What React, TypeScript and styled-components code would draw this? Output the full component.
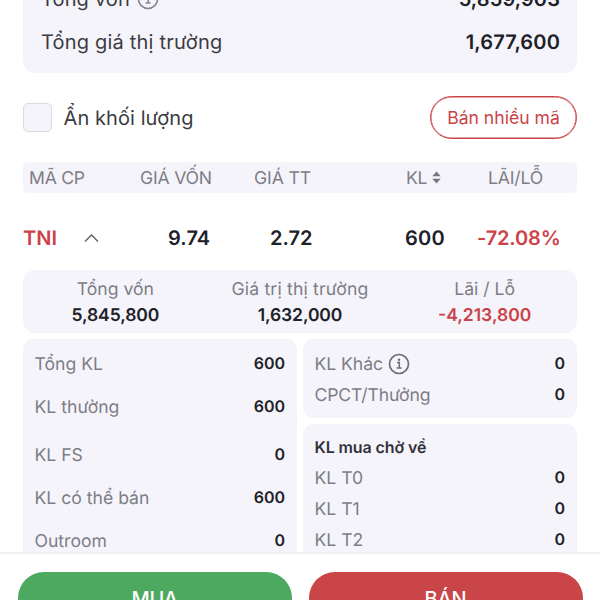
import React from "react";
import styled, { createGlobalStyle } from "styled-components";

const GlobalStyle = createGlobalStyle`
  *, *::before, *::after { box-sizing: border-box; }
  body {
    margin: 0;
    background: #fff;
    font-family: Inter, "Noto Sans", sans-serif;
    text-rendering: geometricPrecision;
    color: #26272e;
  }
`;

const surface = "#f5f4fb";
const muted = "#7d7d85";
const red = "#cb4249";

const Screen = styled.main`
  width: 600px;
  height: 600px;
  display: flex;
  flex-direction: column;
  overflow: hidden;
  background: #fff;
`;

const Content = styled.section`
  height: 552px;
  flex: none;
  overflow: hidden;
  display: flex;
  flex-direction: column;
  padding: 0 23px;
`;

const Label = styled.span<{ $size?: number; $track?: number; $tone?: string; $weight?: number }>`
  font-size: ${(p) => p.$size ?? 17.6}px;
  font-weight: ${(p) => p.$weight ?? 400};
  letter-spacing: ${(p) => p.$track ?? 0}px;
  color: ${(p) => p.$tone ?? muted};
  line-height: 1.2;
  white-space: nowrap;
`;

const Caption = styled(Label)`
  padding-top: 1.4px;
`;

const Value = styled(Label)`
  font-weight: ${(p) => p.$weight ?? 600};
  color: ${(p) => p.$tone ?? "#202127"};
`;

const Summary = styled.div`
  flex: none;
  height: 73px;
  display: flex;
  flex-direction: column;
  justify-content: flex-end;
  padding: 0 17px 10px 18px;
  border-radius: 0 0 12px 12px;
  background: ${surface};
`;

const SummaryRow = styled.div`
  flex: none;
  height: 43px;
  display: flex;
  align-items: center;
  justify-content: space-between;
`;

const WithIcon = styled.div<{ $gap: number }>`
  display: flex;
  align-items: center;
  gap: ${(p) => p.$gap}px;
`;

const Tools = styled.div`
  flex: none;
  height: 89px;
  display: flex;
  align-items: center;
  justify-content: space-between;
`;

const Checkbox = styled.span`
  width: 29px;
  height: 29px;
  border: 1px solid #dcdbe3;
  border-radius: 5px;
  background: ${surface};
`;

const SellManyButton = styled.button`
  width: 147px;
  height: 43px;
  padding: 0;
  border: 1px solid ${red};
  box-shadow: inset 0 0 0 0.5px ${red};
  border-radius: 22px;
  background: #fff;
  font-family: inherit;
`;

const TableHead = styled.div`
  flex: none;
  height: 31px;
  display: grid;
  grid-template-columns: 111px 114px 152px 82px 1fr;
  align-items: center;
  padding-left: 6px;
  border-radius: 5px;
  background: ${surface};
`;

const StockRow = styled.div`
  flex: none;
  height: 77px;
  display: grid;
  grid-template-columns: 61px 84px 102px 135px 72px 1fr;
  align-items: center;
  padding-top: 14px;
  padding-bottom: 1px;
`;

const Totals = styled.div`
  flex: none;
  height: 63px;
  display: grid;
  grid-template-columns: repeat(3, 1fr);
  border-radius: 12px;
  background: ${surface};
`;

const Total = styled.div`
  display: flex;
  flex-direction: column;
  align-items: center;
  justify-content: center;
  gap: 4px;
  padding-top: 2px;
`;

const Details = styled.div`
  flex: none;
  display: grid;
  grid-template-columns: 274px 274px;
  gap: 6px;
  margin-top: 6px;
`;

const RightColumn = styled.div`
  display: flex;
  flex-direction: column;
  gap: 6px;
`;

const Card = styled.div<{ $height: number; $top: number }>`
  height: ${(p) => p.$height}px;
  padding: ${(p) => p.$top}px 12px 0 11.5px;
  border-radius: 10px;
  background: ${surface};
`;

const DetailRow = styled.div<{ $height: number }>`
  height: ${(p) => p.$height}px;
  display: flex;
  align-items: center;
  justify-content: space-between;
`;

const Footer = styled.footer`
  flex: none;
  height: 80px;
  display: grid;
  grid-template-columns: 274px 274px;
  gap: 17px;
  padding: 18px 0 0 17.5px;
  border-top: 2px solid #efeff2;
  background: #fff;
`;

const ActionButton = styled.button<{ $color: string }>`
  height: 52px;
  padding: 1px 0 0;
  border: 0;
  border-radius: 26px;
  background: ${(p) => p.$color};
  font-family: inherit;
`;

const InfoIcon = ({ tone = "#6d6d74" }: { tone?: string }) => (
  <svg width="22" height="22" viewBox="0 0 22 22" fill="none" stroke={tone}>
    <circle cx="11" cy="11" r="9.5" strokeWidth="1.7" />
    <path d="M9 9.6h2.3v5.3M8.6 15h5" strokeWidth="1.5" />
    <circle cx="11" cy="6.8" r="1.2" fill={tone} stroke="none" />
  </svg>
);

const SortIcon = () => (
  <svg width="9" height="13" viewBox="0 0 9 13" fill="#77777e">
    <path d="M.3 5.2 4.5.5l4.2 4.7zM.3 7.8h8.4l-4.2 4.7z" />
  </svg>
);

const ChevronUp = () => (
  <svg width="15" height="9" viewBox="0 0 15 9" fill="none" stroke="#66666c" strokeWidth="1.5">
    <path d="m1 7.5 6.5-6.5L14 7.5" />
  </svg>
);

const holdings = [
  { label: "Tổng KL", value: "600", height: 43 },
  { label: "KL thường", value: "600", height: 43 },
  { label: "KL FS", value: "0", height: 54 },
  { label: "KL có thể bán", value: "600", height: 31 },
  { label: "Outroom", value: "0", height: 55 },
];

const pending = ["KL T0", "KL T1", "KL T2"];

export default function App() {
  return (
    <Screen>
      <GlobalStyle />
      <Content>
        <Summary>
          <SummaryRow>
            <WithIcon $gap={7.5}>
              <Label $size={20} $track={0.15} $tone="#3b3b42">Tổng vốn</Label>
              <InfoIcon tone="#85858b" />
            </WithIcon>
            <Value $size={20} $track={0.1}>5,859,903</Value>
          </SummaryRow>
          <SummaryRow>
            <Label $size={20} $track={0.2} $tone="#3b3b42">Tổng giá thị trường</Label>
            <Value $size={20} $track={0.15}>1,677,600</Value>
          </SummaryRow>
        </Summary>

        <Tools>
          <WithIcon $gap={11.5}>
            <Checkbox />
            <Label $size={20} $track={0.08} $tone="#3b3b42">Ẩn khối lượng</Label>
          </WithIcon>
          <SellManyButton>
            <Label $tone={red}>Bán nhiều mã</Label>
          </SellManyButton>
        </Tools>

        <TableHead>
          <Caption $track={-0.25}>MÃ CP</Caption>
          <Caption $track={-0.2}>GIÁ VỐN</Caption>
          <Caption $track={-0.1}>GIÁ TT</Caption>
          <WithIcon $gap={5}>
            <Caption $track={-0.25}>KL</Caption>
            <SortIcon />
          </WithIcon>
          <Caption $track={-0.15}>LÃI/LỖ</Caption>
        </TableHead>

        <StockRow>
          <Value $size={20} $tone={red}>TNI</Value>
          <WithIcon $gap={0}><ChevronUp /></WithIcon>
          <Value $size={20} $track={0.1}>9.74</Value>
          <Value $size={20}>2.72</Value>
          <Value $size={20} $track={0.2}>600</Value>
          <Value $size={20} $track={-0.15} $tone={red}>-72.08%</Value>
        </StockRow>

        <Totals>
          <Total>
            <Label>Tổng vốn</Label>
            <Value $size={17.5} $track={-0.1}>5,845,800</Value>
          </Total>
          <Total>
            <Label $track={0.18}>Giá trị thị trường</Label>
            <Value $size={17.5} $track={-0.1}>1,632,000</Value>
          </Total>
          <Total>
            <Label>Lãi / Lỗ</Label>
            <Value $size={17.5} $tone={red}>-4,213,800</Value>
          </Total>
        </Totals>

        <Details>
          <Card $height={240} $top={3}>
            {holdings.map((row) => (
              <DetailRow key={row.label} $height={row.height}>
                <Caption>{row.label}</Caption>
                <Value $size={16}>{row.value}</Value>
              </DetailRow>
            ))}
          </Card>
          <RightColumn>
            <Card $height={79} $top={9}>
              <DetailRow $height={31}>
                <WithIcon $gap={4.5}>
                  <Caption $track={-0.05}>KL Khác</Caption>
                  <InfoIcon />
                </WithIcon>
                <Value $size={16}>0</Value>
              </DetailRow>
              <DetailRow $height={32}>
                <Caption $track={-0.15}>CPCT/Thưởng</Caption>
                <Value $size={16}>0</Value>
              </DetailRow>
            </Card>
            <Card $height={150} $top={9}>
              <DetailRow $height={29}>
                <Value $size={16} $track={-0.1} $tone="#303138">KL mua chờ về</Value>
              </DetailRow>
              {pending.map((label) => (
                <DetailRow key={label} $height={31.2}>
                  <Caption>{label}</Caption>
                  <Value $size={16}>0</Value>
                </DetailRow>
              ))}
            </Card>
          </RightColumn>
        </Details>
      </Content>

      <Footer>
        <ActionButton $color="#4da95f">
          <Label $size={20} $weight={500} $track={-0.2} $tone="#fff">MUA</Label>
        </ActionButton>
        <ActionButton $color="#c94548">
          <Label $size={20} $weight={500} $track={-0.2} $tone="#fff">BÁN</Label>
        </ActionButton>
      </Footer>
    </Screen>
  );
}
